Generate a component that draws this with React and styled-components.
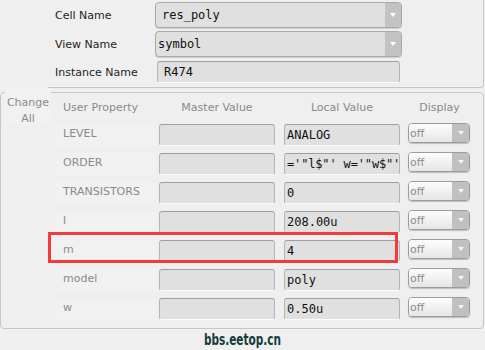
import React from "react";
import styled, { createGlobalStyle } from "styled-components";

const Global = createGlobalStyle`
  html, body { margin: 0; padding: 0; background: #efefef; }
  body { font-family: "DejaVu Sans", "Open Sans", sans-serif; overflow: hidden; }
`;

const Page = styled.div`
  width: 485px;
  height: 350px;
  display: flex;
  flex-direction: column;
  box-sizing: border-box;
`;

const TopFrame = styled.div`
  margin-left: 48px;
  margin-right: 1px;
  padding: 2px 0 5px 7px;
  border-right: 1px solid #c6c6c6;
  border-bottom: 1px solid #c6c6c6;
  border-bottom-right-radius: 4px;
  display: grid;
  grid-template-columns: 100px 247px;
  grid-template-rows: 26px 26px 22px;
  row-gap: 3px;
  align-items: center;
  & > :nth-child(5), & > :nth-child(6) { margin-top: 2px; }
`;

const TopLabel = styled.span`
  font-size: 11px;
  color: #1e1e1e;
`;

const Combo = styled.div`
  height: 26px;
  box-sizing: border-box;
  display: flex;
  border: 1px solid #a9a9a9;
  border-radius: 4px;
  background: #e0e0e0;
  overflow: hidden;
  box-shadow: 0 1px 0 #d0d0d0;
`;

const ComboText = styled.span`
  flex: 1;
  display: flex;
  align-items: center;
  padding-left: ${(p) => p.$pad || 6}px;
  font-family: "DejaVu Sans Mono", monospace;
  font-size: 12px;
  color: #111;
`;

const ComboArrow = styled.span`
  width: 16px;
  background: #c3c3c3;
  display: flex;
  align-items: center;
  justify-content: center;
`;

const Tri = ({ color = "#fff" }) => (
  <svg width="6" height="4" viewBox="0 0 6 4">
    <path d="M0 0 L6 0 L3 4 Z" fill={color} />
  </svg>
);

const Entry = styled.div`
  height: ${(p) => p.$h || 22}px;
  width: ${(p) => (p.$w ? p.$w + "px" : "auto")};
  margin-left: ${(p) => p.$ml || 0}px;
  box-sizing: border-box;
  background: #e0e0e0;
  border: 1px solid #b4b4b4;
  border-top-color: #9e9e9e;
  border-bottom-color: #fbfbfb;
  border-radius: 3px;
  display: flex;
  align-items: center;
  padding-left: ${(p) => (p.$pad != null ? p.$pad : 6)}px;
  font-family: "DejaVu Sans Mono", monospace;
  font-size: 12px;
  letter-spacing: ${(p) => (p.$tight ? "-0.15px" : "0")};
  color: #111;
  overflow: hidden;
  white-space: pre;
`;

const Frame = styled.div`
  position: relative;
  margin-top: 4px;
  margin-right: 1px;
  height: 237px;
  box-sizing: border-box;
  border: 1px solid #c6c6c6;
  border-radius: 4px;
  padding: 4px 0 0 55px;
`;

const Legend = styled.div`
  position: absolute;
  left: 4px;
  top: -5px;
  width: 46px;
  height: 36px;
  padding-top: 7px;
  box-sizing: border-box;
  background: #f1f1f1;
  text-align: center;
  font-size: 11px;
  line-height: 16px;
  color: #8a8a8a;
`;

const Grid = styled.div`
  display: grid;
  grid-template-columns: 94px 116px 116px 61px;
  column-gap: 9px;
  grid-template-rows: 20px;
  grid-auto-rows: 22px;
  row-gap: 7px;
  align-items: center;
`;

const Head = styled.span`
  font-size: 11px;
  color: #8a8a8a;
  text-align: ${(p) => p.$align || "center"};
  padding-left: ${(p) => p.$pl || 0}px;
`;

const PropLabel = styled.span`
  font-size: 11px;
  color: #8a8a8a;
  padding: 0 0 4px 7px;
  height: 22px;
  box-sizing: border-box;
  display: flex;
  align-items: center;
  background: #f1f1f1;
  margin-right: -6px;
`;

const Display = styled.div`
  height: 20px;
  margin-top: -4px;
  margin-left: -1px;
  box-sizing: border-box;
  display: flex;
  border: 1px solid #9c9c9c;
  border-radius: 4px;
  overflow: hidden;
  box-shadow: 0 1px 1px #bdbdbd;
`;

const DisplayText = styled.span`
  flex: 1;
  display: flex;
  align-items: center;
  padding-left: 1px;
  background: linear-gradient(#fdfdfd, #e6e6e6);
  font-size: 11px;
  color: #8c8c8c;
`;

const DisplayArrow = styled.span`
  width: 17px;
  background: #c0c0c0;
  display: flex;
  align-items: center;
  justify-content: center;
`;

const Highlight = styled.div`
  position: absolute;
  left: 47px;
  top: 139px;
  width: 350px;
  height: 31px;
  box-sizing: border-box;
  border: 3px solid #f03c3c;
  pointer-events: none;
`;

const Watermark = styled.div`
  display: flex;
  justify-content: center;
  margin-top: 3px;
`;

const WatermarkText = styled.span`
  display: inline-block;
  font-family: "DejaVu Sans Condensed", "DejaVu Sans", sans-serif;
  font-weight: bold;
  font-size: 15px;
  line-height: 17px;
  color: #163c3c;
  transform: scaleX(0.78);
`;

const rows = [
  ["LEVEL", "ANALOG"],
  ["ORDER", "='\"l$\"' w='\"w$\"'"],
  ["TRANSISTORS", "0"],
  ["l", "208.00u"],
  ["m", "4"],
  ["model", "poly"],
  ["w", "0.50u"],
];

export default function App() {
  return (
    <Page>
      <Global />
      <TopFrame>
        <TopLabel>Cell Name</TopLabel>
        <Combo>
          <ComboText $pad={6}>res_poly</ComboText>
          <ComboArrow><Tri /></ComboArrow>
        </Combo>
        <TopLabel>View Name</TopLabel>
        <Combo>
          <ComboText $pad={2}>symbol</ComboText>
          <ComboArrow><Tri /></ComboArrow>
        </Combo>
        <TopLabel>Instance Name</TopLabel>
        <Entry $w={243} $ml={2}>R474</Entry>
      </TopFrame>
      <Frame>
        <Legend>Change<br />All</Legend>
        <Grid>
          <Head $align="left" $pl={7}>User Property</Head>
          <Head>Master Value</Head>
          <Head>Local Value</Head>
          <Head>Display</Head>
          {rows.map(([name, val]) => (
            <React.Fragment key={name}>
              <PropLabel>{name}</PropLabel>
              <Entry />
              <Entry $pad={2} $tight={val.length > 12}>{val}</Entry>
              <Display>
                <DisplayText>off</DisplayText>
                <DisplayArrow><Tri color="#f4f4f4" /></DisplayArrow>
              </Display>
            </React.Fragment>
          ))}
        </Grid>
        <Highlight />
      </Frame>
      <Watermark><WatermarkText>bbs.eetop.cn</WatermarkText></Watermark>
    </Page>
  );
}
